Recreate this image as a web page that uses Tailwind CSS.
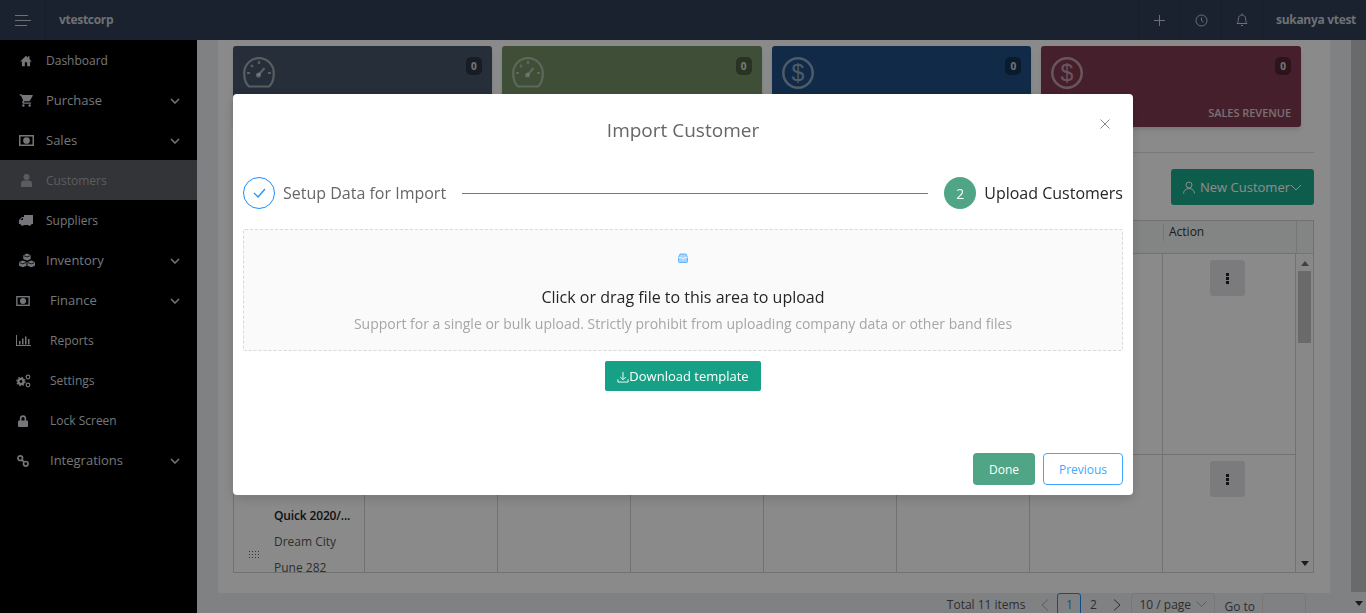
<!DOCTYPE html>
<html lang="en">
<head>
  <meta charset="UTF-8">
  <title>Customers</title>
  <script src="https://cdn.jsdelivr.net/npm/@tailwindcss/browser@4"></script>
</head>
<body class="h-[613px] overflow-hidden font-['Open_Sans',sans-serif] text-[13px] text-[#555]">

  <!-- top bar -->
  <header class="h-10 bg-[#2f3e54] flex items-stretch text-[#c8cdd3]">
    <div class="w-[46px] flex items-center justify-center border-r border-[#2a3749]">
      <svg width="16" height="11" viewBox="0 0 16 11" fill="none" stroke="currentColor"><path d="M0 .5h13M0 5.500h16M0 10.500h12"/></svg>
    </div>
    <div class="pl-[13px] flex items-center font-bold text-[12px] tracking-[-0.3px]">vtestcorp</div>
    <div class="ml-auto flex items-stretch">
      <div class="w-[42px] flex items-center justify-center border-l border-[#2a3749]">
        <svg width="11" height="11" viewBox="0 0 11 11" stroke="currentColor" fill="none"><path d="M5.500 0v11M0 5.500h11"/></svg>
      </div>
      <div class="w-[41px] flex items-center justify-center border-l border-[#2a3749]">
        <svg width="13" height="13" viewBox="0 0 13 13" stroke="currentColor" fill="none"><circle cx="6.500" cy="6.500" r="5.500"/><path d="M6.500 3.500v3.200l2 1.300"/></svg>
      </div>
      <div class="w-[41px] flex items-center justify-center border-l border-[#2a3749]">
        <svg width="12" height="14" viewBox="0 0 12 14" stroke="currentColor" fill="none"><path d="M1 10.500c1-1 1.300-2 1.300-4.500C2.300 3.500 4 2 6 2s3.700 1.500 3.700 4c0 2.500.3 3.500 1.300 4.500zM6 .5V2M5 12.500h2"/></svg>
      </div>
      <div class="w-[104px] pl-[13px] flex items-center border-l border-[#2a3749] font-bold text-[12px] tracking-[-0.3px] whitespace-nowrap">sukanya vtest</div>
    </div>
  </header>

  <div class="flex h-[573px]">
    <!-- sidebar -->
    <aside class="w-[197px] shrink-0 bg-black text-[#d3d8de]">
      <a class="h-10 pt-px flex items-center text-[12px]">
        <span class="w-[46px] flex justify-center pl-[8px] pr-[2px]">
          <svg class="w-[14px] h-[14px]" viewBox="0 0 24 24" fill="currentColor"><path d="M10 21v-7h4v7h5v-8h3l-4-4V4h-2.500v2.500L12 3 2 13h3v8z"/></svg>
        </span>
        <span>Dashboard</span>
      </a>
      <a class="h-10 pt-px flex items-center">
        <span class="w-[46px] flex justify-center pl-[8px] pr-[2px]">
          <svg class="w-[15px] h-[15px]" viewBox="0 0 24 24" fill="currentColor"><path d="M7 18a2 2 0 1 0 0 4 2 2 0 0 0 0-4zM1 2v2h2l3.600 7.600-1.350 2.450C4.500 15.400 5.500 17 7 17h12v-2H7.400l1-2h7.500c.75 0 1.400-.4 1.750-1L22 4.500c.3-.5 0-1.500-1-1.500H5.200l-.9-1zM17 18a2 2 0 1 0 0 4 2 2 0 0 0 0-4z"/></svg>
        </span>
        <span>Purchase</span>
        <svg class="ml-auto mr-[17px]" width="10" height="6" viewBox="0 0 10 6" fill="none" stroke="currentColor" stroke-width="1.500"><path d="M1 1l4 4 4-4"/></svg>
      </a>
      <a class="h-10 pt-px flex items-center">
        <span class="w-[46px] flex justify-center pl-[8px] pr-[2px]">
          <svg width="15" height="11" viewBox="0 0 15 11" fill="none" stroke="currentColor" stroke-width="1.500"><rect x=".75" y=".75" width="13.500" height="9.500"/><circle cx="7.500" cy="5.500" r="2.600" fill="currentColor"/></svg>
        </span>
        <span>Sales</span>
        <svg class="ml-auto mr-[17px]" width="10" height="6" viewBox="0 0 10 6" fill="none" stroke="currentColor" stroke-width="1.500"><path d="M1 1l4 4 4-4"/></svg>
      </a>
      <a class="h-10 pt-px flex items-center text-[12px] bg-[#5d5f66] text-[#a6a8ad]">
        <span class="w-[46px] flex justify-center pl-[8px] pr-[2px]">
          <svg width="11" height="13" viewBox="0 0 11 13" fill="currentColor"><circle cx="5.500" cy="3" r="3"/><path d="M0 13V9.500C0 7.500 1.500 6.500 3 6.500h5c1.500 0 3 1 3 3V13z"/></svg>
        </span>
        <span>Customers</span>
      </a>
      <a class="h-10 pt-px flex items-center text-[12px]">
        <span class="w-[46px] flex justify-center pl-[8px] pr-[2px]">
          <svg width="14" height="12" viewBox="0 0 14 12" fill="currentColor"><path d="M14 0H5v2H3L0 5v4h1.500a2 2 0 0 0 3.500 1h4a2 2 0 0 0 3.500-1H14zM1.500 5l2-2H4v2z"/></svg>
        </span>
        <span>Suppliers</span>
      </a>
      <a class="h-10 pt-px flex items-center">
        <span class="w-[46px] flex justify-center pl-[7px]">
          <svg width="18" height="16" viewBox="0 0 17 15"><path fill="currentColor" d="M8.500.5l3.500 1.500v3.500L8.500 7 5 5.500V2zM4.500 7L8 8.500V12l-3.500 1.500L1 12V8.500zM12.500 7L16 8.500V12l-3.500 1.500L9 12V8.500z"/><path fill="none" stroke="#000" stroke-width=".8" d="M5.500 2.500l3 1.200 3-1.200M1.500 9l3 1.200 3-1.200M9.500 9l3 1.200 3-1.200"/></svg>
        </span>
        <span>Inventory</span>
        <svg class="ml-auto mr-[17px]" width="10" height="6" viewBox="0 0 10 6" fill="none" stroke="currentColor" stroke-width="1.500"><path d="M1 1l4 4 4-4"/></svg>
      </a>
      <a class="h-10 pt-px flex items-center">
        <span class="w-[50px] flex justify-center pl-[4px] pr-[8px]">
          <svg width="14" height="10" viewBox="0 0 15 11" fill="none" stroke="currentColor" stroke-width="1.500"><rect x=".75" y=".75" width="13.500" height="9.500"/><circle cx="7.500" cy="5.500" r="2.600" fill="currentColor"/></svg>
        </span>
        <span>Finance</span>
        <svg class="ml-auto mr-[17px]" width="10" height="6" viewBox="0 0 10 6" fill="none" stroke="currentColor" stroke-width="1.500"><path d="M1 1l4 4 4-4"/></svg>
      </a>
      <a class="h-10 pt-px flex items-center text-[12px]">
        <span class="w-[50px] flex justify-center pl-[4px] pr-[8px]">
          <svg width="15" height="11" viewBox="0 0 15 11" fill="currentColor"><path d="M0 0h1v10h14v1H0zM3 6h1.500v3.500H3zM6 3.500h1.500v6H6zM9 1.500h1.500v8H9zM12 4h1.500v5.500H12z"/></svg>
        </span>
        <span>Reports</span>
      </a>
      <a class="h-10 pt-px flex items-center text-[12px]">
        <span class="w-[50px] flex justify-center pl-[4px] pr-[8px]">
          <svg width="15" height="14" viewBox="0 0 15 14" fill="none" stroke="currentColor"><circle cx="5" cy="7.500" r="2.600" stroke-width="2.400"/><circle cx="5" cy="7.500" r="4.200" stroke-width="1.200" stroke-dasharray="1.500 1.800"/><circle cx="12" cy="3" r="1.800" stroke-width="1.200"/><circle cx="12" cy="11" r="1.800" stroke-width="1.200"/></svg>
        </span>
        <span>Settings</span>
      </a>
      <a class="h-10 pt-px flex items-center text-[12px]">
        <span class="w-[50px] flex justify-center pl-[4px] pr-[8px]">
          <svg width="10" height="12" viewBox="0 0 11 13" fill="currentColor"><path d="M2 6V3.800a3.500 3.500 0 0 1 7 0V6h1a1 1 0 0 1 1 1v5a1 1 0 0 1-1 1H1a1 1 0 0 1-1-1V7a1 1 0 0 1 1-1zm1.800 0h3.400V3.800a1.700 1.700 0 0 0-3.400 0z"/></svg>
        </span>
        <span>Lock Screen</span>
      </a>
      <a class="h-10 pt-px flex items-center">
        <span class="w-[50px] flex justify-center pl-[4px] pr-[8px]">
          <svg width="12" height="12" viewBox="0 0 13 13" fill="none" stroke="currentColor" stroke-width="1.800"><circle cx="3.500" cy="3.500" r="2.500"/><circle cx="9.500" cy="9.500" r="2.500"/><path d="M5.500 5.500l2 2"/></svg>
        </span>
        <span>Integrations</span>
        <svg class="ml-auto mr-[17px]" width="10" height="6" viewBox="0 0 10 6" fill="none" stroke="currentColor" stroke-width="1.500"><path d="M1 1l4 4 4-4"/></svg>
      </a>
    </aside>

    <!-- page -->
    <main class="flex-1 flex bg-[#e9ebee] min-w-0">
      <div class="flex-1 pl-[21px] pr-[21px] min-w-0">
        <div class="h-[553px] bg-[#fbfcfc] pl-[15px] pr-[16px] pt-[6px] overflow-hidden">
          <div class="flex gap-[10px] w-[1068px]">
            <div class="w-[259px] h-[81px] rounded-[3px] bg-[#455468] shadow-md flex justify-between pl-[10px] pr-[10px] pt-[11px] text-white/50">
              <svg width="32" height="31" viewBox="0 0 32 31" fill="none" stroke="currentColor" stroke-width="2.200"><path d="M6 29.500h20c3-2.500 4.800-6.500 4.800-13.500a14.800 14.800 0 0 0-29.600 0c0 7 1.800 11 4.800 13.500z"/><path d="M15.500 18l6-7M16 4v3M4 16h3M25 16h3M8 8l2 2"/><circle cx="15.500" cy="18" r="1.500" fill="currentColor"/></svg>
              <span class="h-[18px] w-4 rounded-[5px] bg-black/35 text-[10px] font-bold flex items-center justify-center text-white/80">0</span>
            </div>
            <div class="w-[260px] h-[81px] rounded-[3px] bg-[#748f64] shadow-md flex justify-between pl-[10px] pr-[10px] pt-[11px] text-white/40">
              <svg width="32" height="31" viewBox="0 0 32 31" fill="none" stroke="currentColor" stroke-width="2.200"><path d="M6 29.500h20c3-2.500 4.800-6.500 4.800-13.500a14.800 14.800 0 0 0-29.600 0c0 7 1.800 11 4.800 13.500z"/><path d="M15.500 18l6-7M16 4v3M4 16h3M25 16h3M8 8l2 2"/><circle cx="15.500" cy="18" r="1.500" fill="currentColor"/></svg>
              <span class="h-[18px] w-4 rounded-[5px] bg-black/35 text-[10px] font-bold flex items-center justify-center text-white/80">0</span>
            </div>
            <div class="w-[260px] h-[81px] rounded-[3px] bg-[#1f4d81] shadow-md flex justify-between pl-[10px] pr-[10px] pt-[11px] text-white/50">
              <svg width="32" height="32" viewBox="0 0 32 32" fill="none" stroke="currentColor" stroke-width="2.500"><circle cx="16" cy="16" r="14.700"/><text x="16" y="24" text-anchor="middle" font-size="23" fill="currentColor" stroke="none" font-family="Liberation Sans, sans-serif">$</text></svg>
              <span class="h-[18px] w-4 rounded-[5px] bg-black/35 text-[10px] font-bold flex items-center justify-center text-white/80">0</span>
            </div>
            <div class="relative w-[260px] h-[81px] rounded-[3px] bg-[#803a50] shadow-md flex justify-between pl-[10px] pr-[10px] pt-[11px] text-white/50">
              <svg width="32" height="32" viewBox="0 0 32 32" fill="none" stroke="currentColor" stroke-width="2.500"><circle cx="16" cy="16" r="14.700"/><text x="16" y="24" text-anchor="middle" font-size="23" fill="currentColor" stroke="none" font-family="Liberation Sans, sans-serif">$</text></svg>
              <span class="h-[18px] w-4 rounded-[5px] bg-black/35 text-[10px] font-bold flex items-center justify-center text-white/80">0</span>
              <span class="absolute right-[10px] bottom-[9px] text-[11px] font-semibold tracking-[-0.05px] text-white/75 leading-none">SALES REVENUE</span>
            </div>
          </div>

          <div class="mt-[25px] border-t border-[#ddd]"></div>

          <div class="mt-[16px] h-9 flex justify-end">
            <button class="w-[143px] h-9 pt-px rounded-[3px] bg-[#1aa98b] text-white flex items-center justify-center gap-[5px]">
              <svg width="12" height="13" viewBox="0 0 12 13" fill="none" stroke="currentColor"><circle cx="6" cy="4" r="3"/><path d="M.5 12.500c0-3 2.500-5 5.500-5s5.500 2 5.500 5"/></svg>
              <span class="flex items-center">New Customer<svg width="12" height="7" viewBox="0 0 12 7" fill="none" stroke="currentColor"><path d="M1 1l5 5 5-5"/></svg></span>
            </button>
          </div>

          <!-- table -->
          <div class="mt-[15px] h-[353px] border border-[#cdd0d0] bg-[#fbfcfc] grid grid-cols-[131px_133px_133px_133px_133px_133px_133px_133px_1fr] grid-rows-[33px_201px_1fr] overflow-hidden">
            <div class="bg-[#eff1f1] border-b border-[#cdd0d0] col-span-7"></div>
            <div class="bg-[#eff1f1] border-b border-[#cdd0d0] flex items-start pt-[3px]">
              <span class="border-l border-[#d5d8d8] pl-[5px] h-[17px] leading-[16px] text-[12px] text-[#333]">Action</span>
            </div>
            <div class="bg-[#eff1f1] border-b border-[#cdd0d0] border-l border-[#d5d8d8]"></div>

            <div class="border-r border-b border-[#cdd0d0]"></div>
            <div class="border-r border-b border-[#cdd0d0]"></div>
            <div class="border-r border-b border-[#cdd0d0]"></div>
            <div class="border-r border-b border-[#cdd0d0]"></div>
            <div class="border-r border-b border-[#cdd0d0]"></div>
            <div class="border-r border-b border-[#cdd0d0]"></div>
            <div class="border-r border-b border-[#cdd0d0]"></div>
            <div class="border-r border-b border-[#cdd0d0] pt-[6px] pr-[3px] flex justify-center items-start">
              <button class="w-[35px] h-9 rounded-[3px] bg-[#e0e1e3] flex flex-col items-center justify-center gap-px">
                <i class="size-[3px] bg-[#222] block"></i><i class="size-[3px] bg-[#222] block"></i><i class="size-[3px] bg-[#222] block"></i>
              </button>
            </div>
            <div class="row-span-2 bg-[#f8f8f8] flex flex-col items-center relative">
              <span class="mt-[7px] border-x-[4px] border-x-transparent border-b-[5px] border-b-[#777]"></span>
              <span class="mt-[5px] w-[13px] h-[72px] bg-[#c1c1c1]"></span>
              <span class="absolute bottom-[6px] border-x-[4px] border-x-transparent border-t-[5px] border-t-[#333]"></span>
            </div>

            <div class="border-r border-[#cdd0d0] relative pl-[40px] pt-[48px] overflow-hidden leading-[26px] text-[12px] whitespace-nowrap">
              <div class="font-semibold tracking-[-0.15px] text-[#222]">Quick 2020/...</div>
              <div>Dream City</div>
              <div>Pune 282</div>
              <svg class="absolute left-[15px] top-[96px]" width="11" height="9" viewBox="0 0 11 9" fill="#666"><path d="M0 0h1v1H0zM3 0h1v1H3zM6 0h1v1H6zM9 0h1v1H9zM0 3h1v1H0zM3 3h1v1H3zM6 3h1v1H6zM9 3h1v1H9zM0 6h1v1H0zM3 6h1v1H3zM6 6h1v1H6zM9 6h1v1H9z"/></svg>
            </div>
            <div class="border-r border-[#cdd0d0]"></div>
            <div class="border-r border-[#cdd0d0]"></div>
            <div class="border-r border-[#cdd0d0]"></div>
            <div class="border-r border-[#cdd0d0]"></div>
            <div class="border-r border-[#cdd0d0]"></div>
            <div class="border-r border-[#cdd0d0]"></div>
            <div class="border-r border-[#cdd0d0] pt-[6px] pr-[3px] flex justify-center items-start">
              <button class="w-[35px] h-9 rounded-[3px] bg-[#e0e1e3] flex flex-col items-center justify-center gap-px">
                <i class="size-[3px] bg-[#222] block"></i><i class="size-[3px] bg-[#222] block"></i><i class="size-[3px] bg-[#222] block"></i>
              </button>
            </div>
          </div>
        </div>

        <!-- pagination -->
        <div class="h-5 flex items-start justify-end pr-[24px] text-[12px] text-[#555] whitespace-nowrap">
          <span class="mt-[3px] mr-[16px]">Total 11 items</span>
          <svg class="mt-[6px] mr-[8px]" width="8" height="12" viewBox="0 0 8 12" fill="none" stroke="#aaa"><path d="M7 .5L1 6l6 5.500"/></svg>
          <span class="w-[24px] h-6 rounded-[3px] border border-[#1890ff] text-[#1890ff] text-center pt-[2px]">1</span>
          <span class="w-[24px] mt-[3px] text-center">2</span>
          <svg class="mt-[6px] ml-[8px] mr-[10px]" width="8" height="12" viewBox="0 0 8 12" fill="none" stroke="#555"><path d="M1 .5L7 6l-6 5.500"/></svg>
          <span class="h-6 w-[84px] mr-[9px] border border-[#d9d9d9] rounded-[3px] pl-[7px] pt-[2px] flex gap-[5px]">10 / page<svg class="mt-[5px]" width="11" height="6" viewBox="0 0 11 6" fill="none" stroke="#aaa"><path d="M.5.500l5 5 5-5"/></svg></span>
          <span class="mt-[5px] mr-[7px]">Go to</span>
          <span class="h-6 w-[44px] border border-[#d9d9d9] rounded-[3px]"></span>
        </div>
      </div>

      <!-- page scrollbar -->
      <div class="w-[15px] shrink-0 bg-[#e9ebee] flex flex-col items-center justify-between">
        <span class="h-[552px] w-full bg-[#c1c1c1]"></span>
        <span class="mb-[7px] border-x-[4px] border-x-transparent border-t-[5px] border-t-[#333]"></span>
      </div>
    </main>
  </div>

  <!-- import modal -->
  <div class="fixed inset-0 bg-black/45 pt-[94px] flex justify-center items-start">
    <div class="relative w-[900px] h-[401px] bg-white rounded-[4px] shadow-[0_4px_12px_rgba(0,0,0,0.15)] px-[10px]">
      <h2 class="h-[73px] pt-[22px] text-center text-[19px] leading-[29px] text-[#666]">Import Customer</h2>
      <button class="absolute right-[23px] top-[25px] text-[#888]">
        <svg class="block" width="10" height="10" viewBox="0 0 10 10" stroke="currentColor" fill="none"><path d="M.5.500l9 9M9.500.500l-9 9"/></svg>
      </button>

      <div class="mt-[10px] flex items-center h-8">
        <span class="size-8 rounded-full border border-[#1890ff] text-[#1890ff] flex items-center justify-center shrink-0">
          <svg width="13" height="10" viewBox="0 0 13 10" fill="none" stroke="currentColor" stroke-width="1.200"><path d="M1 5l4 4 7-8"/></svg>
        </span>
        <span class="ml-2 text-[16px] text-[#666] whitespace-nowrap">Setup Data for Import</span>
        <span class="mx-4 flex-1 h-px bg-[#1890ff]"></span>
        <span class="size-8 rounded-full bg-[#4fa586] text-white text-[14px] flex items-center justify-center shrink-0">2</span>
        <span class="ml-2 text-[16px] text-[#262626] whitespace-nowrap">Upload Customers</span>
      </div>

      <div class="mt-5 h-[122px] bg-[#fafafa] border border-dashed border-[#d9d9d9] rounded-[2px] flex flex-col items-center">
        <svg class="mt-[23px]" width="10" height="10" viewBox="0 0 10 10" fill="#a9d4ff" stroke="#40a9ff" stroke-width=".8"><path d="M2 1h6l1.500 3.500v4a1 1 0 0 1-1 1h-7a1 1 0 0 1-1-1v-4z"/><path d="M.5 4.500h2.800l.7 1.200h2l.7-1.200h2.800" fill="none" stroke="#fff"/></svg>
        <p class="mt-[22px] text-[16px] leading-6 text-[#262626]">Click or drag file to this area to upload</p>
        <p class="mt-[3px] text-[14px] leading-6 text-[#a6a6a6]">Support for a single or bulk upload. Strictly prohibit from uploading company data or other band files</p>
      </div>

      <div class="mt-[10px] flex justify-center">
        <button class="w-[156px] h-[30px] pt-px bg-[#16a085] rounded-[2px] text-white flex items-center justify-center">
          <svg width="12" height="12" viewBox="0 0 13 13" fill="none" stroke="currentColor"><path d="M6.500 1v8M3.500 6.500l3 3 3-3M1 9v3h11V9"/></svg>
          Download template
        </button>
      </div>

      <div class="absolute right-[10px] bottom-[10px] flex gap-2">
        <button class="w-[62px] h-8 pt-px bg-[#4fa586] rounded-[4px] text-white text-[12px] font-medium">Done</button>
        <button class="w-[80px] h-8 pt-px bg-white border border-[#40a9ff] rounded-[4px] text-[#40a9ff] text-[12px]">Previous</button>
      </div>
    </div>
  </div>
</body>
</html>
